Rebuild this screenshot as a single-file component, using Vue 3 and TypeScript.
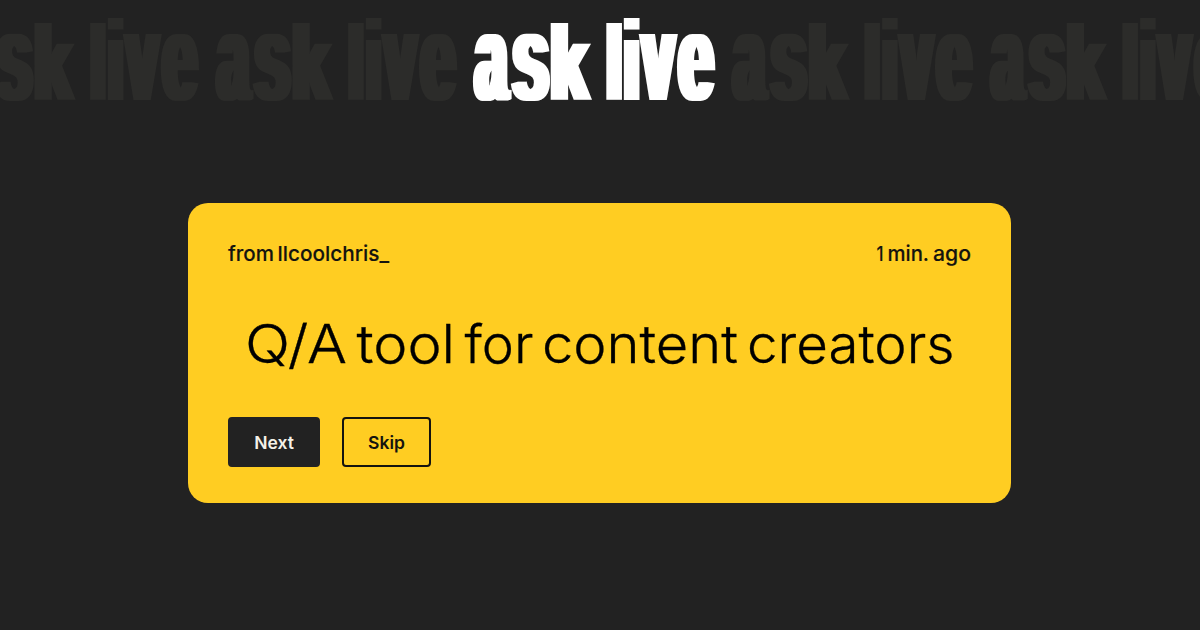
<script setup lang="ts">
interface GlyphBox {
  char: string
  left: number
  right: number
  top: number
  bottom: number
}

interface Word {
  text: string
  x: number
  width: number
}

const wordmark: GlyphBox[] = [
  { char: 'a', left: 0, right: 39.6, top: 33.7, bottom: 100.8 },
  { char: 's', left: 38, right: 78, top: 33.7, bottom: 100.8 },
  { char: 'k', left: 77.6, right: 119.7, top: 23, bottom: 100 },
  { char: 'l', left: 133.3, right: 149.6, top: 23, bottom: 100 },
  { char: 'i', left: 151, right: 167.3, top: 17.3, bottom: 100 },
  { char: 'v', left: 166.2, right: 206, top: 34.5, bottom: 100 },
  { char: 'e', left: 204, right: 243.4, top: 33.7, bottom: 100.8 },
]

const period = 258.1
const copies = [-2, -1, 1, 2, 0]
// Horizontal-only thickening that turns the bold face into a heavy condensed one.
const spread = 4

const ctx = document.createElement('canvas').getContext('2d')!
ctx.font = '700 100px "Liberation Sans"'

// Condense each glyph so that its inked area fills its box.
const glyphs = wordmark.map((g) => {
  const m = ctx.measureText(g.char)
  const inkLeft = -m.actualBoundingBoxLeft
  const inkRight = m.actualBoundingBoxRight
  const inkTop = -m.actualBoundingBoxAscent
  const inkBottom = m.actualBoundingBoxDescent
  const left = g.left + spread
  const sx = (g.right - spread - left) / (inkRight - inkLeft)
  const sy = (g.bottom - g.top) / (inkBottom - inkTop)
  return {
    char: g.char,
    transform: `matrix(${sx} 0 0 ${sy} ${left - inkLeft * sx} ${g.top - inkTop * sy})`,
  }
})

const author: Word[] = [
  { text: 'from', x: 0, width: 46 },
  { text: 'llcoolchris_', x: 49.5, width: 111.5 },
]
const age: Word[] = [
  { text: '1', x: 1.5, width: 7 },
  { text: 'min.', x: 12.5, width: 41.5 },
  { text: 'ago', x: 58, width: 38 },
]
const question: Word[] = [
  { text: 'Q/A', x: 17, width: 102 },
  { text: 'tool', x: 128.5, width: 98.5 },
  { text: 'for', x: 236.5, width: 69 },
  { text: 'content', x: 314, width: 196 },
  { text: 'creators', x: 519, width: 207.5 },
]
</script>

<template>
  <main class="page">
    <svg class="banner" width="1200" height="120" viewBox="0 0 1200 120">
      <filter id="spread" filterUnits="userSpaceOnUse" x="-10" y="0" width="270" height="120" color-interpolation-filters="sRGB">
        <feMorphology operator="dilate" :radius="`${spread} 0`" />
      </filter>
      <g
        v-for="n in copies"
        :key="n"
        :class="n === 0 ? 'mark' : 'mark ghost'"
        :transform="`translate(${472.4 + n * period} 0)`"
      >
        <g filter="url(#spread)">
          <text v-for="g in glyphs" :key="g.char" :transform="g.transform">{{ g.char }}</text>
        </g>
      </g>
    </svg>

    <section class="card">
      <header class="meta">
        <svg width="162" height="30">
          <text y="21"><tspan v-for="w in author" :key="w.text" :x="w.x" :textLength="w.width" lengthAdjust="spacingAndGlyphs">{{ w.text }}</tspan></text>
        </svg>
        <svg width="96" height="30">
          <text y="21"><tspan v-for="w in age" :key="w.text" :x="w.x" :textLength="w.width" lengthAdjust="spacingAndGlyphs">{{ w.text }}</tspan></text>
        </svg>
      </header>
      <svg class="question" width="743" height="70">
        <text y="50"><tspan v-for="w in question" :key="w.text" :x="w.x" :textLength="w.width" lengthAdjust="spacingAndGlyphs">{{ w.text }}</tspan></text>
      </svg>
      <div class="actions">
        <button class="btn next">Next</button>
        <button class="btn skip">Skip</button>
      </div>
    </section>
  </main>
</template>

<style>
body {
  background: #222222;
}
</style>

<style scoped>
.page {
  width: 1200px;
  height: 630px;
  overflow: hidden;
  background: #222222;
  font-family: Inter, "Noto Sans", sans-serif;
  display: flex;
  flex-direction: column;
  align-items: flex-start;
}
svg {
  display: block;
  flex: none;
  overflow: visible;
}
.mark {
  font-family: "Liberation Sans", sans-serif;
  font-size: 100px;
  font-weight: 700;
  fill: #ffffff;
}
.ghost {
  fill: #2c2c2a;
}
.card {
  box-sizing: border-box;
  width: 823px;
  height: 299.7px;
  margin: 83px 0 0 188px;
  padding: 37px 40px 36px;
  border-radius: 20px;
  background: #ffcd22;
  display: flex;
  flex-direction: column;
}
.meta {
  display: flex;
  justify-content: space-between;
  font-size: 20.5px;
  font-weight: 500;
  fill: #14130f;
  stroke: #14130f;
  stroke-width: 0.15px;
}
.question {
  margin-top: 43px;
  font-size: 53px;
  font-weight: 300;
  fill: #000000;
  stroke: #000000;
  stroke-width: 0.3px;
}
.actions {
  display: flex;
  gap: 22px;
  margin-top: auto;
}
.btn {
  box-sizing: border-box;
  height: 49.7px;
  padding: 1px 0 0;
  border: 2px solid #222222;
  border-radius: 4px;
  font: 600 17.5px Inter, "Noto Sans", sans-serif;
  text-align: center;
}
.next {
  width: 92px;
  background: #222222;
  color: #f4f1e8;
}
.skip {
  width: 89px;
  border-color: #14130f;
  background: transparent;
  color: #14130f;
}
</style>
